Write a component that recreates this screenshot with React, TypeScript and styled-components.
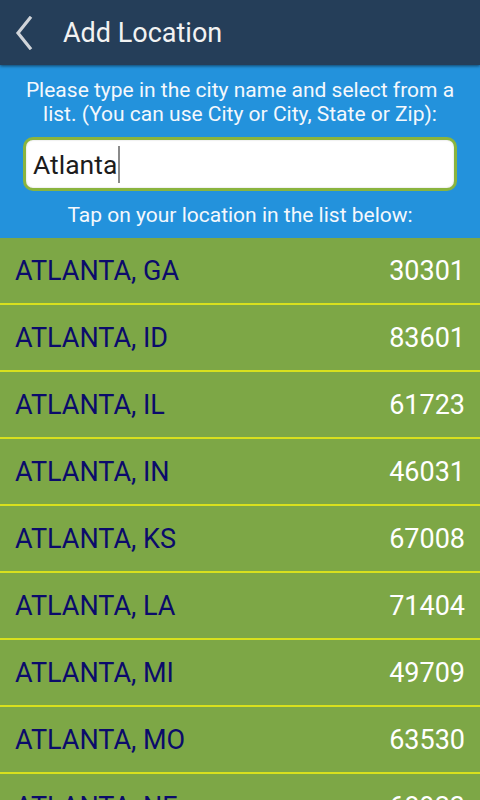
import React from 'react';
import styled, { createGlobalStyle } from 'styled-components';

const GlobalStyle = createGlobalStyle`
  html, body {
    margin: 0;
    padding: 0;
    background: #7da746;
  }
  body {
    font-family: Roboto, "Noto Sans", "Liberation Sans", sans-serif;
  }
`;

const Screen = styled.div`
  width: 480px;
  height: 800px;
  overflow: hidden;
  display: flex;
  flex-direction: column;
  background: #7da746;
`;

const Header = styled.header`
  position: relative;
  z-index: 1;
  height: 65px;
  flex: none;
  display: flex;
  align-items: center;
  background: #253e59;
  box-shadow: 0 1px 3px rgba(0, 0, 0, 0.55);
`;

const BackButton = styled.button`
  width: 48px;
  height: 65px;
  padding: 0 0 0 13px;
  border: 0;
  background: none;
  display: flex;
  align-items: center;
`;

const Title = styled.h1`
  margin: 0 0 0 15px;
  font-size: 27px;
  font-weight: 400;
  color: #f2f2f2;
`;

const SearchPanel = styled.section`
  flex: none;
  height: 173px;
  box-sizing: border-box;
  padding-top: 13px;
  background: #2392dc;
  display: flex;
  flex-direction: column;
  align-items: center;
`;

const Hint = styled.p<{ $gap?: number }>`
  margin: ${p => p.$gap ?? 0}px 0 0;
  font-size: 21px;
  line-height: 24px;
  color: #f4f8fc;
  text-align: center;
  white-space: nowrap;
`;

const Field = styled.div`
  align-self: stretch;
  margin: 11px 23px 0;
  height: 54px;
  box-sizing: border-box;
  border: 3px solid #8ab43e;
  border-radius: 10px;
  background: #fff;
  box-shadow: inset 0 0 2px rgba(0, 0, 0, 0.2);
  padding-left: 7px;
  display: flex;
  align-items: center;
  font-size: 26.5px;
  color: #1c1c1c;
`;

const Caret = styled.span`
  display: inline-block;
  width: 2px;
  height: 37px;
  margin-left: 1px;
  background: #8a8a8a;
`;

const List = styled.ul`
  margin: 0;
  padding: 0;
  list-style: none;
`;

const Row = styled.li`
  height: 65px;
  border-bottom: 2px solid #d8e01e;
  padding: 0 15px;
  display: flex;
  align-items: center;
  justify-content: space-between;
  font-size: 27px;
`;

const City = styled.span`
  color: #0b0b6b;
`;

const Zip = styled.span`
  color: #ffffff;
`;

const places: [string, string][] = [
  ['ATLANTA, GA', '30301'],
  ['ATLANTA, ID', '83601'],
  ['ATLANTA, IL', '61723'],
  ['ATLANTA, IN', '46031'],
  ['ATLANTA, KS', '67008'],
  ['ATLANTA, LA', '71404'],
  ['ATLANTA, MI', '49709'],
  ['ATLANTA, MO', '63530'],
  ['ATLANTA, NE', '68923'],
];

const App = () => {
  return (
    <Screen>
      <GlobalStyle />
      <Header>
        <BackButton aria-label="Back">
          <svg width="22" height="34" viewBox="0 0 22 34">
            <path d="M17 2 L5 17 L17 32" fill="none" stroke="#d0d4d9" strokeWidth="3.2" strokeLinecap="square" />
          </svg>
        </BackButton>
        <Title>Add Location</Title>
      </Header>
      <SearchPanel>
        <Hint>
          Please type in the city name and select from a
          <br />
          list. (You can use City or City, State or Zip):
        </Hint>
        <Field>
          Atlanta
          <Caret />
        </Field>
        <Hint $gap={12}>Tap on your location in the list below:</Hint>
      </SearchPanel>
      <List>
        {places.map(([city, zip]) => (
          <Row key={zip}>
            <City>{city}</City>
            <Zip>{zip}</Zip>
          </Row>
        ))}
      </List>
    </Screen>
  );
};

export default App;
